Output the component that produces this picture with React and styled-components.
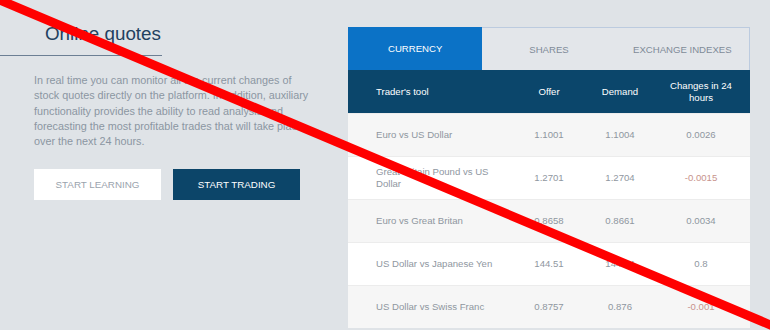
import styled, { createGlobalStyle } from 'styled-components'

const GlobalStyle = createGlobalStyle`
  * { box-sizing: border-box; }
  html, body {
    margin: 0;
    padding: 0;
    background: #dfe3e7;
    font-family: "Liberation Sans", Arial, sans-serif;
  }
`

const Page = styled.div`
  position: relative;
  width: 770px;
  height: 330px;
  overflow: hidden;
  display: flex;
  align-items: flex-start;
`

const Left = styled.div`
  width: 348px;
  padding-top: 22px;
`

const Heading = styled.h2`
  margin: 0;
  width: 162px;
  padding: 0 0 9px 45px;
  border-bottom: 1px solid #6c7f94;
  font-size: 18.8px;
  line-height: 24px;
  font-weight: 400;
  white-space: nowrap;
  color: #22405f;
`

const Text = styled.p`
  margin: 17px 0 0;
  padding-left: 34px;
  width: 316px;
  font-size: 10.8px;
  line-height: 15.3px;
  color: #8b96a2;
`

const Buttons = styled.div`
  display: flex;
  gap: 12px;
  margin-top: 20px;
  padding-left: 34px;
`

const Button = styled.button`
  width: 127px;
  height: 31px;
  padding: 0;
  border: none;
  font-family: inherit;
  font-size: 9.8px;
  text-transform: uppercase;
  background: ${p => (p.$primary ? '#0c4569' : '#ffffff')};
  color: ${p => (p.$primary ? '#ffffff' : '#9aa3ad')};
`

const Panel = styled.div`
  margin-top: 27px;
  width: 402px;
`

const Tabs = styled.div`
  display: grid;
  grid-template-columns: repeat(3, 1fr);
  height: 43px;
  border: 1px solid #bccbdf;
  border-bottom: none;
`

const Tab = styled.div`
  display: flex;
  align-items: center;
  justify-content: center;
  font-size: 9.6px;
  text-transform: uppercase;
  background: ${p => (p.$active ? '#0b72c6' : '#e3e6ea')};
  color: ${p => (p.$active ? '#ffffff' : '#7f8b98')};
  margin: ${p => (p.$active ? '-1px 0 0 -1px' : '0')};
`

const Row = styled.div`
  display: grid;
  grid-template-columns: 170px 62px 80px 82px;
  align-items: center;
  height: 43px;
  padding-right: 8px;
  font-size: 9.6px;
  line-height: 12px;
  background: ${p => (p.$head ? '#0b466b' : p.$odd ? '#f6f6f6' : '#ffffff')};
  color: ${p => (p.$head ? '#ffffff' : '#8f979f')};
  border-top: ${p => (p.$head ? 'none' : '1px solid #ececec')};
`

const Tool = styled.div`
  padding-left: 28px;
  padding-right: 12px;
`

const Cell = styled.div`
  text-align: center;
  color: ${p => (p.$neg ? '#c8938c' : 'inherit')};
`

const Slash = styled.svg`
  position: absolute;
  left: 0;
  top: 0;
  pointer-events: none;
`

const quotes = [
  ['Euro vs US Dollar', '1.1001', '1.1004', '0.0026'],
  ['Great Britain Pound vs US Dollar', '1.2701', '1.2704', '-0.0015'],
  ['Euro vs Great Britan', '0.8658', '0.8661', '0.0034'],
  ['US Dollar vs Japanese Yen', '144.51', '144.54', '0.8'],
  ['US Dollar vs Swiss Franc', '0.8757', '0.876', '-0.001'],
]

export default function App() {
  return (
    <Page>
      <GlobalStyle />
      <Left>
        <Heading>Online quotes</Heading>
        <Text>
          In real time you can monitor all the current changes of stock quotes directly on the
          platform. In addition, auxiliary functionality provides the ability to read analysis and
          forecasting the most profitable trades that will take place over the next 24 hours.
        </Text>
        <Buttons>
          <Button>Start learning</Button>
          <Button $primary>Start trading</Button>
        </Buttons>
      </Left>
      <Panel>
        <Tabs>
          <Tab $active>Currency</Tab>
          <Tab>Shares</Tab>
          <Tab>Exchange indexes</Tab>
        </Tabs>
        <Row $head>
          <Tool>Trader's tool</Tool>
          <Cell>Offer</Cell>
          <Cell>Demand</Cell>
          <Cell>Changes in 24 hours</Cell>
        </Row>
        {quotes.map((q, i) => (
          <Row key={q[0]} $odd={i % 2 === 0}>
            <Tool>{q[0]}</Tool>
            <Cell>{q[1]}</Cell>
            <Cell>{q[2]}</Cell>
            <Cell $neg={q[3].startsWith('-')}>{q[3]}</Cell>
          </Row>
        ))}
      </Panel>
      <Slash width="770" height="330" viewBox="0 0 770 330">
        <line x1="-5" y1="-2" x2="780" y2="329" stroke="#ff0000" strokeWidth="9" />
      </Slash>
    </Page>
  )
}
